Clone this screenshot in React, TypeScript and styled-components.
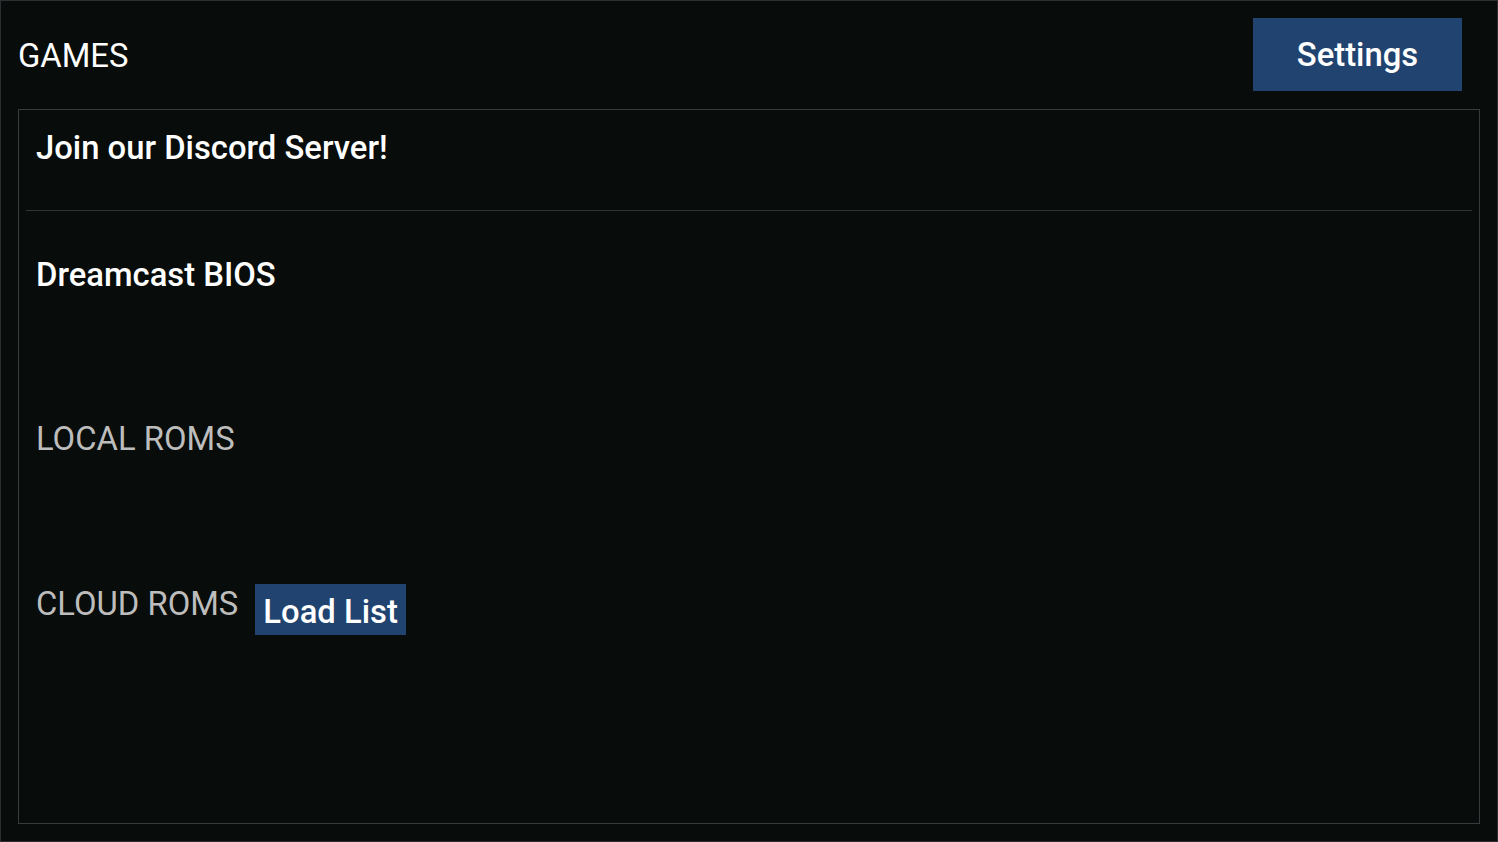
import { createGlobalStyle, styled } from "styled-components";

const GlobalStyle = createGlobalStyle`
  html, body {
    margin: 0;
    padding: 0;
    background: #080c0a;
  }
  body {
    font-family: Roboto, "Liberation Sans", sans-serif;
    color: #ffffff;
  }
`;

const FONT = "32.8px";
const LINE = "38.4px";

export default function App() {
  return (
    <>
      <GlobalStyle />
      <Page>
        <Header>
          <Title>GAMES</Title>
          <SettingsButton>Settings</SettingsButton>
        </Header>

        <Panel>
          <DiscordRow>Join our Discord Server!</DiscordRow>
          <Divider />

          <Section $top={45} $height={164}>
            <BiosTitle>Dreamcast BIOS</BiosTitle>
          </Section>

          <Section $height={165}>
            <SectionHead>
              <SectionTitle>LOCAL ROMS</SectionTitle>
            </SectionHead>
          </Section>

          <Section>
            <SectionHead>
              <SectionTitle>CLOUD ROMS</SectionTitle>
              <LoadButton>Load List</LoadButton>
            </SectionHead>
          </Section>
        </Panel>
      </Page>
    </>
  );
}

const Page = styled.div`
  box-sizing: border-box;
  width: 1498px;
  height: 842px;
  border: 1px solid #2c2e31;
  padding: 17px;
  display: flex;
  flex-direction: column;
  gap: 18px;
  background: #080c0a;
`;

const Header = styled.div`
  display: flex;
  align-items: center;
  justify-content: space-between;
  height: 73px;
  padding-right: 18px;
`;

const Title = styled.h1`
  margin: 3px 0 0;
  font-size: ${FONT};
  font-weight: 400;
  line-height: ${LINE};
`;

const SettingsButton = styled.button`
  height: 73px;
  width: 209px;
  padding: 1px 0 0;
  border: none;
  background: #21436f;
  color: #ffffff;
  font-family: inherit;
  font-size: ${FONT};
  font-weight: 500;
  cursor: pointer;
`;

const Panel = styled.div`
  flex: 1;
  box-sizing: border-box;
  border: 1px solid #3a3b3f;
  padding: 7px;
  display: flex;
  flex-direction: column;
`;

const DiscordRow = styled.div`
  box-sizing: border-box;
  height: 93px;
  padding: 12px 10px 0;
  font-size: ${FONT};
  font-weight: 500;
  line-height: ${LINE};
`;

const Divider = styled.div`
  height: 1px;
  background: #333438;
`;

const Section = styled.div<{ $top?: number; $height?: number }>`
  box-sizing: border-box;
  margin-top: ${(p) => p.$top ?? 0}px;
  height: ${(p) => (p.$height ? `${p.$height}px` : "auto")};
  padding: 0 10px;
`;

const BiosTitle = styled.div`
  font-size: ${FONT};
  font-weight: 500;
  line-height: ${LINE};
`;

const SectionHead = styled.div`
  display: flex;
  align-items: flex-start;
  gap: 17px;
`;

const SectionTitle = styled.div`
  font-size: ${FONT};
  font-weight: 400;
  line-height: ${LINE};
  color: #bdbdbd;
`;

const LoadButton = styled.button`
  box-sizing: border-box;
  height: 51px;
  margin-top: -1px;
  padding: 5px 8px 0;
  border: none;
  background: #21436f;
  color: #ffffff;
  font-family: inherit;
  font-size: ${FONT};
  font-weight: 500;
  line-height: ${LINE};
  cursor: pointer;
`;
